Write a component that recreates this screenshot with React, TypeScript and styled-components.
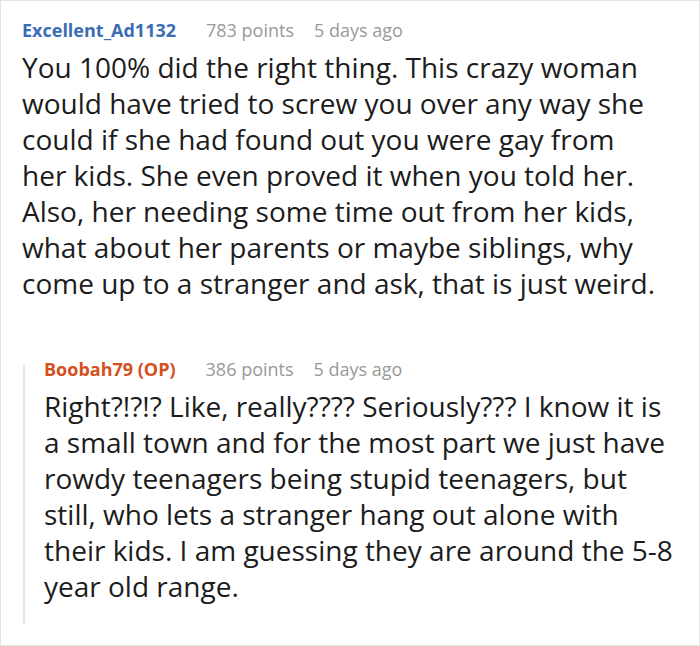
import React from "react";
import styled, { createGlobalStyle } from "styled-components";

const Global = createGlobalStyle`
  html, body { margin: 0; padding: 0; background: #fff; }
  body { font-family: "Open Sans", "Noto Sans", sans-serif; }
  * { box-sizing: border-box; }
`;

const Card = styled.div`
  width: 700px;
  height: 646px;
  border: 1px solid #e3e3e3;
  padding: 17px 4px 0 21px;
  background: #fff;
  overflow: hidden;
`;

const Meta = styled.div`
  display: flex;
  align-items: baseline;
  font-size: 18px;
  line-height: 24px;
  white-space: nowrap;
`;

const Author = styled.span<{ $op?: boolean }>`
  font-weight: 700;
  color: ${(p) => (p.$op ? "#d4501d" : "#3b6db6")};
  margin-right: 30px;
`;

const Info = styled.span`
  color: #999999;
  margin-right: 20px;
`;

const Body = styled.p`
  margin: 7px 0 0;
  font-size: 28px;
  line-height: 36px;
  color: #1c1c1c;
  white-space: pre-line;
`;

const Reply = styled.div`
  position: relative;
  margin-top: 56px;
  padding: 0 0 21px 22px;
  &::before {
    content: "";
    position: absolute;
    left: 1px;
    top: 8px;
    bottom: 0;
    width: 2px;
    background: #e8e8e8;
  }
`;

type CommentProps = {
  author: string;
  op?: boolean;
  points: number;
  age: string;
  lines: string[];
};

const Comment: React.FC<CommentProps> = ({ author, op, points, age, lines }) => (
  <>
    <Meta>
      <Author $op={op}>{author}</Author>
      <Info>{points} points</Info>
      <Info>{age}</Info>
    </Meta>
    <Body>{lines.join("\n")}</Body>
  </>
);

export default function App() {
  return (
    <>
      <Global />
      <Card>
        <Comment
          author="Excellent_Ad1132"
          points={783}
          age="5 days ago"
          lines={[
            "You 100% did the right thing. This crazy woman",
            "would have tried to screw you over any way she",
            "could if she had found out you were gay from",
            "her kids. She even proved it when you told her.",
            "Also, her needing some time out from her kids,",
            "what about her parents or maybe siblings, why",
            "come up to a stranger and ask, that is just weird.",
          ]}
        />
        <Reply>
          <Comment
            author="Boobah79 (OP)"
            op
            points={386}
            age="5 days ago"
            lines={[
              "Right?!?!? Like, really???? Seriously??? I know it is",
              "a small town and for the most part we just have",
              "rowdy teenagers being stupid teenagers, but",
              "still, who lets a stranger hang out alone with",
              "their kids. I am guessing they are around the 5-8",
              "year old range.",
            ]}
          />
        </Reply>
      </Card>
    </>
  );
}
